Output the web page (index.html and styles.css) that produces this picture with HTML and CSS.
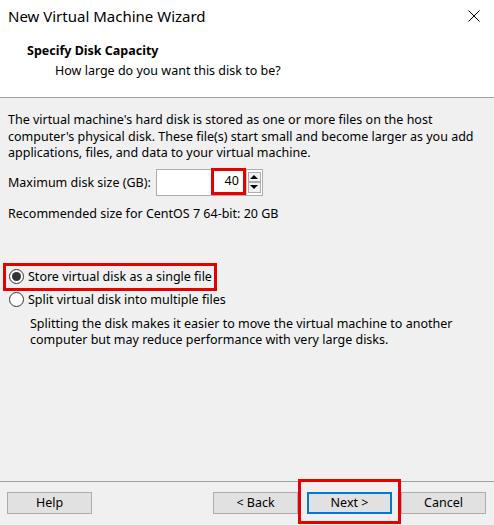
FILE: index.html
```html
<!DOCTYPE html>
<html>
<head>
<meta charset="utf-8">
<link rel="stylesheet" href="styles.css">
</head>
<body>
<div class="window">
  <div class="header">
    <div class="titlebar">
      <span class="title">New Virtual Machine Wizard</span>
      <svg class="close" width="12" height="12" viewBox="0 0 12 12"><path d="M0.5 0.5 L11.5 11.5 M11.5 0.5 L0.5 11.5" stroke="#000" stroke-width="1"/></svg>
    </div>
    <div class="heading">Specify Disk Capacity</div>
    <div class="subheading">How large do you want this disk to be?</div>
  </div>
  <div class="content">
    <p class="intro">The virtual machine's hard disk is stored as one or more files on the host computer's physical disk. These file(s) start small and become larger as you add applications, files, and data to your virtual machine.</p>
    <div class="sizerow">
      <span class="label">Maximum disk size (GB):</span>
      <div class="spinbox">
        <div class="field"><span class="value">40</span></div>
        <div class="spin">
          <div class="spinbtn"><span class="tri-up"></span></div>
          <div class="spinbtn"><span class="tri-down"></span></div>
        </div>
      </div>
    </div>
    <p class="recommend">Recommended size for CentOS 7 64-bit: 20 GB</p>
    <div class="options">
      <span class="mark">
        <span class="radio checked"></span>
        <span class="rtext">Store virtual disk as a single file</span>
      </span>
      <span class="option">
        <span class="radio"></span>
        <span class="rtext">Split virtual disk into multiple files</span>
      </span>
      <p class="desc">Splitting the disk makes it easier to move the virtual machine to another computer but may reduce performance with very large disks.</p>
    </div>
  </div>
  <div class="footer">
    <button class="btn">Help</button>
    <div class="spacer"></div>
    <button class="btn">&lt; Back</button>
    <div class="nextmark"><button class="btn primary">Next &gt;</button></div>
    <button class="btn">Cancel</button>
  </div>
</div>
</body>
</html>
```

FILE: styles.css
```css
* { box-sizing: border-box; }
html, body { margin: 0; padding: 0; }
body {
  font-family: "Noto Sans", "Open Sans", sans-serif;
  font-size: 12.5px;
  color: #000;
  background: #f0f0f0;
}
.window {
  width: 494px;
  height: 525px;
  display: flex;
  flex-direction: column;
  background: #f0f0f0;
  overflow: hidden;
}
.header {
  background: #fff;
  height: 98px;
  border-bottom: 1px solid #a0a0a0;
}
.titlebar {
  height: 31px;
  display: flex;
  align-items: center;
  justify-content: space-between;
  padding: 0 14px 0 8px;
}
.title { font-size: 15px; }
.close { display: block; }
.heading {
  font-weight: bold;
  font-size: 12.5px;
  padding-left: 27px;
  margin-top: 12px;
  line-height: 16px;
}
.subheading {
  padding-left: 55px;
  margin-top: 4px;
  line-height: 16px;
}
.content {
  flex: 1;
  padding: 14px 8px 0 8px;
}
.intro {
  margin: 0;
  line-height: 16.5px;
}
.sizerow {
  display: flex;
  align-items: center;
  margin-top: 7px;
  gap: 5px;
}
.spinbox {
  display: flex;
  width: 107px;
  height: 27px;
  border: 1px solid #abadb3;
  background: #fff;
}
.field {
  flex: 1;
  display: flex;
  justify-content: flex-end;
}
.value {
  width: 35px;
  height: 27px;
  margin-top: -2px;
  border: 3px solid #e60000;
  text-align: right;
  padding-right: 4px;
  line-height: 20px;
}
.spin {
  width: 16px;
  display: flex;
  flex-direction: column;
  border-left: 1px solid #c9c9c9;
  padding: 2px 1px;
  background: #fff;
}
.spinbtn {
  flex: 1;
  background: #f0f0f0;
  border: 1px solid #adadad;
  display: flex;
  align-items: center;
  justify-content: center;
}
.tri-up, .tri-down {
  width: 0; height: 0;
  border-left: 4px solid transparent;
  border-right: 4px solid transparent;
}
.tri-up { border-bottom: 4px solid #000; }
.tri-down { border-top: 4px solid #000; }
.recommend {
  margin: 10px 0 0 0;
  line-height: 16px;
}
.options {
  margin-top: 41px;
  display: flex;
  flex-direction: column;
  align-items: flex-start;
  margin-left: -5px;
}
.mark, .option {
  display: inline-flex;
  align-items: center;
  gap: 4px;
  height: 28px;
}
.mark {
  border: 3px solid #e60000;
  padding-left: 3px;
  padding-right: 2px;
}
.option {
  padding-left: 6px;
  height: 20px;
  margin-top: -1px;
}
.radio {
  width: 15px;
  height: 15px;
  border-radius: 50%;
  border: 1px solid #333;
  background: #fff;
  display: flex;
  align-items: center;
  justify-content: center;
}
.radio.checked::after {
  content: "";
  width: 9px;
  height: 9px;
  border-radius: 50%;
  background: #333;
}
.desc {
  margin: 6px 0 0 27px;
  line-height: 16.5px;
}
.footer {
  height: 44px;
  border-top: 1px solid #a0a0a0;
  display: flex;
  align-items: flex-start;
  padding: 0 8px 0 7px;
}
.spacer { flex: 1; }
.btn {
  font-family: inherit;
  font-size: 12.5px;
  width: 85px;
  height: 22px;
  margin-top: 10px;
  background: #e1e1e1;
  border: 1px solid #adadad;
  color: #000;
  padding: 0;
  line-height: 18px;
}
.nextmark {
  margin-top: -3px;
  border: 3px solid #e60000;
  padding: 10px 6px 7px 6px;
}
.nextmark .btn { margin-top: 0; }
.btn.primary {
  border: 2px solid #0078d7;
}
```
